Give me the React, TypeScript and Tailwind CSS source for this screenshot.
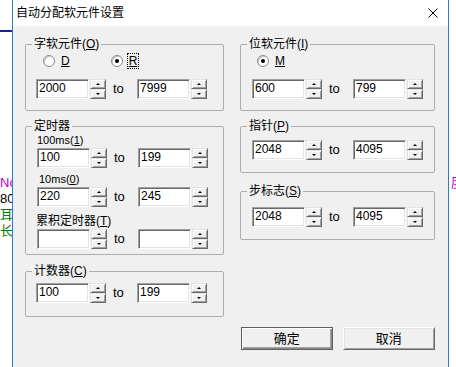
import React from 'react';

const FONT = "font-['Liberation_Sans','Noto_Sans_CJK_SC',sans-serif]";

const SpinHalf: React.FC<{ up?: boolean }> = ({ up }) => (
  <div className="flex h-[10px] w-[16px] items-center justify-center border border-t-[#e3e3e3] border-l-[#e3e3e3] border-r-[#696969] border-b-[#696969] bg-[#f0f0f0] shadow-[inset_1px_1px_0_#ffffff,inset_-1px_-1px_0_#a0a0a0]">
    {up ? (
      <div className="h-0 w-0 border-x-[2px] border-b-[2px] border-x-transparent border-b-black" />
    ) : (
      <div className="h-0 w-0 border-x-[2px] border-t-[2px] border-x-transparent border-t-black" />
    )}
  </div>
);

const Spin = () => (
  <div className="ml-[1px] flex flex-col">
    <SpinHalf up />
    <SpinHalf />
  </div>
);

const Field: React.FC<{ value?: string }> = ({ value }) => (
  <div className="h-[20px] w-[53px] border border-t-[#a0a0a0] border-l-[#a0a0a0] border-r-white border-b-white bg-white pl-[2px] text-[12px] leading-[17px] text-black shadow-[inset_1px_1px_0_#696969,inset_-1px_-1px_0_#e3e3e3]">
    {value}
  </div>
);

const Range: React.FC<{ a?: string; b?: string; className?: string }> = ({ a, b, className }) => (
  <div className={`flex items-center ${className ?? ''}`}>
    <Field value={a} />
    <Spin />
    <span className="w-[31px] pl-[7px] text-[13px] leading-[16px]">to</span>
    <Field value={b} />
    <Spin />
  </div>
);

const Group: React.FC<{ label: React.ReactNode; className?: string; children: React.ReactNode }> = ({
  label,
  className,
  children,
}) => (
  <fieldset className={`rounded-[2px] border border-[#adadad] ${className ?? ''}`}>
    <legend className="ml-[6px] px-[2px] text-[12px] leading-[14px]">{label}</legend>
    {children}
  </fieldset>
);

const Radio: React.FC<{ on?: boolean; label: string; focus?: boolean }> = ({ on, label, focus }) => (
  <div className="flex items-center">
    <div className="flex h-[12px] w-[12px] items-center justify-center rounded-full border border-[#8a8a8a] bg-white shadow-[inset_1px_1px_0_#c8c8c8]">
      {on && <div className="h-[4px] w-[4px] rounded-full bg-black" />}
    </div>
    <span
      className={`ml-[5px] px-[1px] text-[12px] leading-[14px] underline ${
        focus ? 'outline outline-1 outline-dotted outline-black' : ''
      }`}
    >
      {label}
    </span>
  </div>
);

const Btn: React.FC<{ label: string; primary?: boolean; className?: string }> = ({ label, primary, className }) => (
  <div
    className={`flex h-[23px] items-center justify-center bg-[#f0f0f0] text-[13px] ${
      primary
        ? 'border border-[#5e5e5e] shadow-[inset_1px_1px_0_#ffffff,inset_-1px_-1px_0_#8a8a8a,inset_-2px_-2px_0_#a0a0a0]'
        : 'border border-t-[#ffffff] border-l-[#ffffff] border-r-[#696969] border-b-[#696969] shadow-[inset_1px_1px_0_#e3e3e3,inset_-1px_-1px_0_#a0a0a0]'
    } ${className ?? ''}`}
  >
    {label}
  </div>
);

export default function App() {
  return (
    <div className={`flex h-[367px] w-[456px] overflow-hidden bg-white text-black ${FONT}`}>
      {/* window behind, left edge */}
      <div className="flex w-[12px] shrink-0 flex-col overflow-hidden">
        <div className="mt-[30px] h-[2px] w-full bg-[#1c1ca8]" />
        <div className="mt-[143px] whitespace-nowrap text-[13px] leading-[16px]">
          <div className="text-[#c000c0]">Nc</div>
          <div>80</div>
          <div className="text-[#008000]">耳</div>
          <div className="text-[#008000]">长</div>
        </div>
      </div>

      {/* dialog */}
      <div className="flex w-[437px] shrink-0 flex-col border-x border-[#2b7bd3]">
        <div className="flex h-[26px] items-center bg-white pl-[3px]">
          <span className="text-[12px]">自动分配软元件设置</span>
          <svg className="ml-auto mr-[10px]" width="10" height="10" viewBox="0 0 10 10">
            <path d="M0.5 0.5 L9.5 9.5 M9.5 0.5 L0.5 9.5" stroke="#000" strokeWidth="1" />
          </svg>
        </div>

        <div className="flex flex-1 bg-[#f0f0f0] pl-[12px] pt-[11px]">
          {/* left column */}
          <div className="flex w-[199px] flex-col">
            <Group label={<>字软元件(<u>O</u>)</>}>
              <div className="mt-[3px] flex h-[14px] items-center pl-[17px]">
                <Radio label="D" />
                <div className="ml-[40px]">
                  <Radio on label="R" focus />
                </div>
              </div>
              <Range a="2000" b="7999" className="mt-[11px] mb-[11px] pl-[10px]" />
            </Group>

            <Group label="定时器" className="mt-[8px]">
              <div className="mt-[1px] pl-[11px] text-[11px] leading-[12px]">
                100ms(<u>1</u>)
              </div>
              <Range a="100" b="199" className="mt-[2px] pl-[11px]" />
              <div className="mt-[5px] pl-[13px] text-[11px] leading-[12px]">
                10ms(<u>0</u>)
              </div>
              <Range a="220" b="245" className="mt-[2px] pl-[11px]" />
              <div className="mt-[7px] pl-[10px] text-[12px] leading-[14px]">
                累积定时器(<u>T</u>)
              </div>
              <Range className="mt-[1px] mb-[5px] pl-[11px]" />
            </Group>

            <Group label={<>计数器(<u>C</u>)</>} className="mt-[9px]">
              <Range a="100" b="199" className="mt-[5px] mb-[13px] pl-[10px]" />
            </Group>
          </div>

          {/* right column */}
          <div className="ml-[16px] flex w-[195px] flex-col">
            <Group label={<>位软元件(<u>I</u>)</>}>
              <div className="mt-[3px] flex h-[14px] items-center pl-[16px]">
                <Radio on label="M" />
              </div>
              <Range a="600" b="799" className="mt-[11px] mb-[11px] pl-[11px]" />
            </Group>

            <Group label={<>指针(<u>P</u>)</>} className="mt-[8px]">
              <Range a="2048" b="4095" className="mt-[7px] mb-[12px] pl-[11px]" />
            </Group>

            <Group label={<>步标志(<u>S</u>)</>} className="mt-[11px]">
              <Range a="2048" b="4095" className="mt-[9px] mb-[12px] pl-[11px]" />
            </Group>

            <div className="mt-[87px] ml-[1px] flex gap-[10px]">
              <Btn primary label="确定" className="w-[92px]" />
              <Btn label="取消" className="w-[93px]" />
            </div>
          </div>
        </div>
      </div>

      {/* window behind, right edge */}
      <div className="flex-1 overflow-hidden whitespace-nowrap pl-[2px] pt-[175px] text-[13px] leading-[16px] text-[#c000c0]">
        度
      </div>
    </div>
  );
}
